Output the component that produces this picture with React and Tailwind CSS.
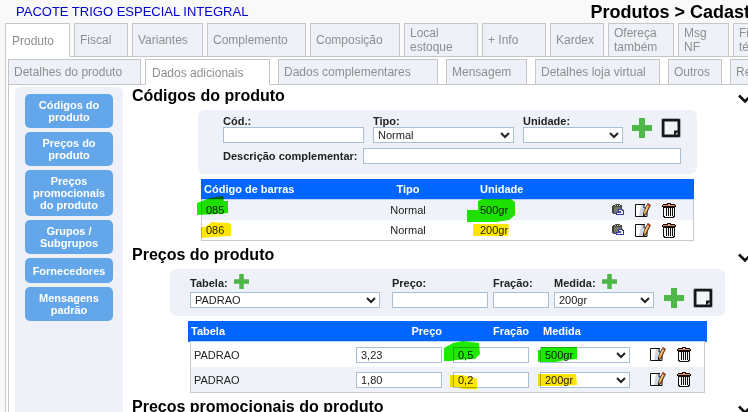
import { useState } from "react";
import clsx from "clsx";

const MAIN_TABS = [
  { label: "Produto", width: "w-[65px]" },
  { label: "Fiscal", width: "w-[54px]" },
  { label: "Variantes", width: "w-[71px]" },
  { label: "Complemento", width: "w-[99px]" },
  { label: "Composição", width: "w-[90px]" },
  { label: "Local estoque", width: "w-[74px]" },
  { label: "+ Info", width: "w-[64px]" },
  { label: "Kardex", width: "w-[54px]" },
  { label: "Ofereça também", width: "w-[66px]" },
  { label: "Msg NF", width: "w-[51px]" },
  { label: "Ficha técnica", width: "w-[60px]" },
];

const SUB_TABS = [
  { label: "Detalhes do produto", width: "w-[133px] -mr-1" },
  { label: "Dados adicionais", width: "w-[125px]" },
  { label: "Dados complementares", width: "w-[160px]" },
  { label: "Mensagem", width: "w-[81px]" },
  { label: "Detalhes loja virtual", width: "w-[125px]" },
  { label: "Outros", width: "w-[54px]" },
  { label: "Relacionados", width: "w-[90px]" },
];

const SHORTCUTS = [
  "Códigos do produto",
  "Preços do produto",
  "Preços promocionais do produto",
  "Grupos / Subgrupos",
  "Fornecedores",
  "Mensagens padrão",
];

const CODES = [
  { code: "085", type: "Normal", unit: "500gr" },
  { code: "086", type: "Normal", unit: "200gr" },
];

const PRICES = [
  { table: "PADRAO", price: "3,23", fraction: "0,5", unit: "500gr" },
  { table: "PADRAO", price: "1,80", fraction: "0,2", unit: "200gr" },
];

const GREEN = "#1eea00";
const YELLOW = "#ffe600";

const FIELD = "block h-4 border border-[#a9bfd3] bg-white text-[11px] leading-[14px] text-[#222]";

// Highlighter stroke laid over the value it marks
function Marker({ className, width, height, color, d }) {
  return (
    <svg
      className={clsx("pointer-events-none absolute mix-blend-multiply", className)}
      width={width}
      height={height}
      viewBox={`0 0 ${width} ${height}`}
      aria-hidden="true"
    >
      <path d={d} fill={color} />
    </svg>
  );
}

function PlusIcon({ size = 20 }) {
  return (
    <svg width={size} height={size} viewBox="0 0 20 20" className="block">
      <path d="M7 0h6v7h7v6h-7v7H7v-7H0V7h7z" fill="#4db848" />
    </svg>
  );
}

function NoteIcon() {
  return (
    <svg width="20" height="20" viewBox="0 0 20 20" className="block">
      <rect width="20" height="20" rx="2" fill="#a9adb2" />
      <rect x="1" y="1" width="18" height="18" rx="1" fill="#16181c" />
      <path d="M3.500 3.500h13v9H13v4H3.500z" fill="#f3f5f9" />
      <path d="M14 16.500l2.500-2.500v2.500z" fill="#d5d8dc" />
    </svg>
  );
}

function CopyIcon() {
  return (
    <svg width="12" height="12" viewBox="0 0 12 12" className="block" shapeRendering="crispEdges">
      <path d="M1 1h2V0h5v1h2v9H1V9H0V2h1z" fill="#444440" />
      <path d="M2 3h7v6H2z" fill="#77766c" />
      <path d="M3 1h1v1H3zM5 1h1v1H5zM7 1h1v1H7z" fill="#d8d4b8" />
      <path d="M6 5h5v1h1v5H4V8h2z" fill="#3a3a96" />
      <path d="M7 6h3v1h1v3H5V9h2z" fill="#f0f0ff" />
      <path d="M7 7h2v2H7z" fill="#4a4aa8" />
    </svg>
  );
}

function EditIcon() {
  return (
    <svg width="16" height="15" viewBox="0 0 16 15" className="block">
      <path d="M.5 1.500h9L13 5v8.500H.5z" fill="#fff" />
      <path d="M6 2h3.500l3 3v8H4z" fill="#cfd6df" />
      <path d="M10 1.500H.5v12h11.500V8" fill="none" stroke="#111" />
      <path d="M9 2v3h2" fill="none" stroke="#222" />
      <path d="M12.800 .6l2.600 1.400-4.400 9-2.500 2.200.1-3.400z" fill="#e9a247" stroke="#2e1608" strokeWidth=".9" />
      <path d="M12.800 2.200L9.500 9.500" stroke="#ffe0a0" strokeWidth=".9" />
      <path d="M12.800 .6l2.600 1.400-.8 1.500-2.600-1.400z" fill="#c84a30" />
      <path d="M8.500 13.200l.1-2 1.300.8z" fill="#000" />
    </svg>
  );
}

function TrashIcon() {
  return (
    <svg width="14" height="15" viewBox="0 0 14 15" className="block" shapeRendering="crispEdges">
      <path d="M5 0h4v1h4v1h1v2H0V2h1V1h4z" fill="#1a0c06" />
      <path d="M1 2h12v1H1z" fill="#d98d62" />
      <path d="M6 1h2v1H6z" fill="#f0b48c" />
      <path d="M1 4h12v10h-1v1H2v-1H1z" fill="#111" />
      <path d="M2 5h10v8h-1v1H3v-1H2z" fill="#f4f4f4" />
      <path d="M4 5h1v8H4zM6 5h1v8H6zM8 5h1v8H8zM10 5h1v8h-1z" fill="#111" />
    </svg>
  );
}

function IconButton({ label, children, className }) {
  return (
    <button type="button" aria-label={label} title={label} className={clsx("shrink-0 cursor-pointer", className)}>
      {children}
    </button>
  );
}

function Tab({ label, width, active, onClick, height }) {
  return (
    <button
      type="button"
      role="tab"
      aria-selected={active}
      onClick={onClick}
      className={clsx(
        "shrink-0 border border-[#c6c6c6] pr-2 text-left text-xs leading-[14px] text-[#8e8e8e]",
        width,
        height,
        active ? "relative border-b-white bg-white pt-px pl-[6px]" : "bg-[#eef2f8] pl-[5px]"
      )}
    >
      {label}
    </button>
  );
}

function Section({ title, children }) {
  return (
    <section className="mb-[3px]">
      <div className="mb-1 flex items-center justify-between pt-px">
        <h2 className="text-base leading-5 font-bold text-black">{title}</h2>
        <button type="button" aria-label={`Recolher ${title}`} className="-mr-1 pt-[5px]">
          <svg width="14" height="10" viewBox="0 0 14 10" className="block">
            <path d="M1 1.500l6 6 6-6" fill="none" stroke="#111" strokeWidth="2.600" />
          </svg>
        </button>
      </div>
      <div className="flex flex-col items-center gap-[5px] pl-[15px]">{children}</div>
    </section>
  );
}

function Label({ htmlFor, children }) {
  return (
    <label htmlFor={htmlFor} className="text-[11px] leading-3 font-bold text-[#222]">
      {children}
    </label>
  );
}

function CodesSection() {
  return (
    <Section title="Códigos do produto">
      <form className="w-[499px] rounded-md bg-[#eef2f8] pt-[5px] pr-4 pb-[10px] pl-[25px]">
        <div className="flex gap-[9px]">
          <div className="flex flex-col">
            <Label htmlFor="codigo">Cód.:</Label>
            <input id="codigo" className={clsx(FIELD, "w-[141px] px-1")} />
          </div>
          <div className="flex flex-col">
            <Label htmlFor="tipo">Tipo:</Label>
            <select id="tipo" defaultValue="Normal" className={clsx(FIELD, "w-[141px]")}>
              <option>Normal</option>
            </select>
          </div>
          <div className="flex flex-col">
            <Label htmlFor="unidade">Unidade:</Label>
            <select id="unidade" defaultValue="" className={clsx(FIELD, "w-[100px]")}>
              <option></option>
              <option>200gr</option>
              <option>500gr</option>
            </select>
          </div>
          <div className="flex items-start gap-[9px] pt-[3px]">
            <IconButton label="Adicionar código">
              <PlusIcon />
            </IconButton>
            <IconButton label="Limpar">
              <NoteIcon />
            </IconButton>
          </div>
        </div>
        <div className="mt-[5px] flex items-center gap-[5px]">
          <Label htmlFor="descricao">Descrição complementar:</Label>
          <input id="descricao" className={clsx(FIELD, "min-w-0 flex-1 px-1")} />
        </div>
      </form>

      <table className="w-[493px] table-fixed border-separate border-spacing-0 text-[11px] leading-[14px] text-[#222]">
        <colgroup>
          <col className="w-[160px]" />
          <col className="w-[94px]" />
          <col className="w-[150px]" />
          <col />
        </colgroup>
        <thead>
          <tr className="h-[21px] bg-[#0066ff] text-white">
            <th className="border-b border-[#b9d3f7] pl-[3px] text-left">Código de barras</th>
            <th className="border-b border-[#b9d3f7]">Tipo</th>
            <th className="border-b border-[#b9d3f7] pl-[25px] text-left">Unidade</th>
            <th aria-label="Ações" className="border-b border-[#b9d3f7]"></th>
          </tr>
        </thead>
        <tbody>
          {CODES.map((row, i) => (
            <tr key={row.code} className={clsx(i === 0 ? "h-5 bg-[#eff3f9]" : "h-[21px] bg-white")}>
              <td className={clsx("border-l border-[#c9c9c9] pl-1", i === 1 && "border-b")}>
                <span className="relative inline-block">
                  {row.code}
                  {i === 0 ? (
                    <Marker
                      className="-top-[7px] -left-[9px]"
                      width={31}
                      height={19}
                      color={GREEN}
                      d="M0 7L13 2l13-2 1 5h4v12l-12 1-19 1z"
                    />
                  ) : (
                    <Marker
                      className="-top-px -left-[5px]"
                      width={30}
                      height={16}
                      color={YELLOW}
                      d="M0 5h4l7-5 17 1 2 2v11l-17 1-13 1z"
                    />
                  )}
                </span>
              </td>
              <td className={clsx("text-center", i === 1 && "border-b border-[#c9c9c9]")}>{row.type}</td>
              <td className={clsx("pl-[25px]", i === 1 && "border-b border-[#c9c9c9]")}>
                <span className="relative inline-block">
                  {row.unit}
                  {i === 0 ? (
                    <Marker
                      className="-top-1 -left-[13px]"
                      width={48}
                      height={23}
                      color={GREEN}
                      d="M11 2l5-2h28l4 3v13l-6 5-13 2H0V11h11z"
                    />
                  ) : (
                    <Marker
                      className="top-px -left-[7px]"
                      width={36}
                      height={12}
                      color={YELLOW}
                      d="M0 0h35l1 2-1 10H0z"
                    />
                  )}
                </span>
              </td>
              <td className={clsx("border-r border-[#c9c9c9] pl-[7px]", i === 1 && "border-b")}>
                <div className="flex items-center gap-[11px]">
                  <IconButton label="Copiar">
                    <CopyIcon />
                  </IconButton>
                  <IconButton label="Editar">
                    <EditIcon />
                  </IconButton>
                  <IconButton label="Excluir">
                    <TrashIcon />
                  </IconButton>
                </div>
              </td>
            </tr>
          ))}
        </tbody>
      </table>
    </Section>
  );
}

function PricesSection() {
  return (
    <Section title="Preços do produto">
      <form className="flex w-[555px] items-end gap-[5px] rounded-md bg-[#eef2f8] pt-[5px] pr-3 pb-2 pl-5">
        <div className="mr-[7px] flex flex-col">
          <div className="flex h-[18px] items-center gap-[6px]">
            <Label htmlFor="tabela">Tabela:</Label>
            <IconButton label="Nova tabela" className="self-start">
              <PlusIcon size={15} />
            </IconButton>
          </div>
          <select id="tabela" defaultValue="PADRAO" className={clsx(FIELD, "w-[190px]")}>
            <option>PADRAO</option>
          </select>
        </div>
        <div className="flex flex-col">
          <div className="flex h-[18px] items-center">
            <Label htmlFor="preco">Preço:</Label>
          </div>
          <input id="preco" className={clsx(FIELD, "w-[96px] px-1")} />
        </div>
        <div className="flex flex-col">
          <div className="flex h-[18px] items-center">
            <Label htmlFor="fracao">Fração:</Label>
          </div>
          <input id="fracao" className={clsx(FIELD, "w-[56px] px-1")} />
        </div>
        <div className="flex flex-col">
          <div className="flex h-[18px] items-center gap-[6px]">
            <Label htmlFor="medida">Medida:</Label>
            <IconButton label="Nova medida" className="self-start">
              <PlusIcon size={15} />
            </IconButton>
          </div>
          <select id="medida" defaultValue="200gr" className={clsx(FIELD, "w-[100px]")}>
            <option>200gr</option>
            <option>500gr</option>
          </select>
        </div>
        <div className="flex gap-[9px] pl-[5px]">
          <IconButton label="Adicionar preço">
            <PlusIcon />
          </IconButton>
          <IconButton label="Limpar">
            <NoteIcon />
          </IconButton>
        </div>
      </form>

      <table className="w-[515px] table-fixed border-separate border-spacing-0 text-[11px] leading-[14px] text-[#222]">
        <colgroup>
          <col className="w-[166px]" />
          <col className="w-[86px]" />
          <col className="w-[87px]" />
          <col className="w-[106px]" />
          <col />
        </colgroup>
        <thead>
          <tr className="h-[21px] bg-[#0066ff] text-white shadow-[-2px_0_#0066ff,2px_0_#0066ff]">
            <th className="border-b border-[#b9d3f7] pl-px text-left">Tabela</th>
            <th className="border-b border-[#b9d3f7] text-right">Preço</th>
            <th className="border-b border-[#b9d3f7] text-right">Fração</th>
            <th className="border-b border-[#b9d3f7] pl-[14px] text-left">Medida</th>
            <th aria-label="Ações" className="border-b border-[#b9d3f7]"></th>
          </tr>
        </thead>
        <tbody>
          {PRICES.map((row, i) => {
            const line = i === 1 && "border-b border-[#c9c9c9]";
            return (
              <tr key={row.unit} className={clsx(i === 1 ? "h-[26px] bg-[#eff3f9]" : "h-[25px] bg-white")}>
                <td className={clsx("border-l border-l-[#c9c9c9] pl-[3px]", line)}>{row.table}</td>
                <td className={clsx(line)}>
                  <input aria-label="Preço" defaultValue={row.price} className={clsx(FIELD, "w-[86px] px-1")} />
                </td>
                <td className={clsx(line)}>
                  <div className="relative ml-[11px]">
                    <input aria-label="Fração" defaultValue={row.fraction} className={clsx(FIELD, "w-[76px] px-1")} />
                    {i === 0 ? (
                      <Marker
                        className="-top-[6px] -left-[9px]"
                        width={36}
                        height={21}
                        color={GREEN}
                        d="M0 7l9-5 10-2 16 2 1 11-5 5-19 1-5 1H0z"
                      />
                    ) : (
                      <Marker
                        className="top-[3px] -left-[3px]"
                        width={27}
                        height={14}
                        color={YELLOW}
                        d="M0 0h12l13 3 2 1v10H13l-5-2H0z"
                      />
                    )}
                  </div>
                </td>
                <td className={clsx(line)}>
                  <div className="relative ml-[11px]">
                    <select aria-label="Medida" defaultValue={row.unit} className={clsx(FIELD, "w-[90px]")}>
                      <option>200gr</option>
                      <option>500gr</option>
                    </select>
                    {i === 0 ? (
                      <Marker
                        className="top-0 -left-[2px]"
                        width={39}
                        height={15}
                        color={GREEN}
                        d="M0 3h3V0h36v12l-12 1-9 2H0z"
                      />
                    ) : (
                      <Marker
                        className="top-[2px] -left-[2px]"
                        width={39}
                        height={12}
                        color={YELLOW}
                        d="M0 0h38l1 11-20 1H0z"
                      />
                    )}
                  </div>
                </td>
                <td className={clsx("border-r border-r-[#c9c9c9] pl-[15px]", line)}>
                  <div className="flex items-center gap-[11px]">
                    <IconButton label="Editar">
                      <EditIcon />
                    </IconButton>
                    <IconButton label="Excluir">
                      <TrashIcon />
                    </IconButton>
                  </div>
                </td>
              </tr>
            );
          })}
        </tbody>
      </table>
    </Section>
  );
}

export default function App() {
  const [mainTab, setMainTab] = useState("Produto");
  const [subTab, setSubTab] = useState("Dados adicionais");

  return (
    <div className="flex h-screen flex-col overflow-hidden bg-[#f9f9f9] pl-[5px] font-['Liberation_Sans',Arial,sans-serif]">
      <header className="flex h-[23px] shrink-0 items-center justify-between pt-px pl-[11px]">
        <span className="text-[13px] leading-5 text-[#0000cc]">PACOTE TRIGO ESPECIAL INTEGRAL</span>
        <h1 className="-mr-5 text-lg leading-5 font-bold whitespace-nowrap text-black">Produtos &gt; Cadastro</h1>
      </header>

      <div role="tablist" className="flex h-[34px] shrink-0 gap-1 border-b border-[#c6c6c6]">
        {MAIN_TABS.map((tab) => (
          <Tab
            key={tab.label}
            {...tab}
            height="h-[34px]"
            active={tab.label === mainTab}
            onClick={() => setMainTab(tab.label)}
          />
        ))}
      </div>

      <div className="flex min-h-0 flex-1 flex-col border-l border-[#c6c6c6] bg-white pt-[2px] pl-[2px]">
        <div role="tablist" className="flex h-[26px] shrink-0 gap-2 border-b border-[#c6c6c6]">
          {SUB_TABS.map((tab) => (
            <Tab
              key={tab.label}
              {...tab}
              height="h-[26px]"
              active={tab.label === subTab}
              onClick={() => setSubTab(tab.label)}
            />
          ))}
        </div>

        <div className="flex min-h-0 flex-1 border-l border-[#c6c6c6] pl-[6px]">
          <nav className="mt-[2px] flex w-[108px] shrink-0 flex-col gap-1 rounded-t-md bg-[#eef2f8] px-[10px] pt-[7px]">
            {SHORTCUTS.map((label) => (
              <button
                key={label}
                type="button"
                className="min-h-[25px] rounded-[5px] bg-[#63a7ea] px-[6px] py-[5px] text-[11px] leading-3 font-bold text-white"
              >
                {label}
              </button>
            ))}
          </nav>

          <main className="min-w-0 flex-1 pl-[9px]">
            <CodesSection />
            <PricesSection />
            <Section title="Preços promocionais do produto" />
          </main>
        </div>
      </div>
    </div>
  );
}
